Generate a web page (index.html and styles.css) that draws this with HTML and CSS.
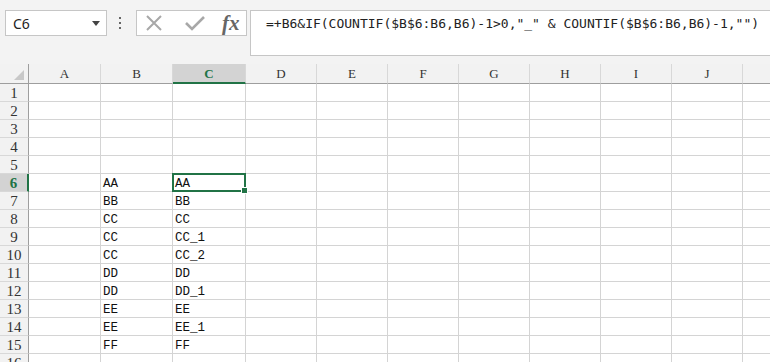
FILE: index.html
```html
<!DOCTYPE html>
<html lang="en">
<head>
  <meta charset="UTF-8">
  <title>Sheet1</title>
  <link rel="stylesheet" href="styles.css">
</head>
<body>
  <div class="toolbar">
    <div class="name-box">
      <span>C6</span>
      <svg class="caret" width="8" height="5" viewBox="0 0 8 5"><path d="M0 0h8L4 5z" fill="#444"/></svg>
    </div>
    <div class="grip"><i></i><i></i><i></i></div>
    <div class="fx-buttons">
      <svg width="20" height="20" viewBox="0 0 20 20"><path d="M3 3L17 17M17 3L3 17" stroke="#a8a8a8" stroke-width="2" fill="none"/></svg>
      <svg width="22" height="20" viewBox="0 0 22 20"><path d="M2 10l6 6L20 4" stroke="#a8a8a8" stroke-width="2.6" fill="none"/></svg>
      <span class="fx">fx</span>
    </div>
    <div class="formula">=+B6&amp;IF(COUNTIF($B$6:B6,B6)-1&gt;0,"_" &amp; COUNTIF($B$6:B6,B6)-1,"")</div>
  </div>

  <div class="sheet" id="sheet"></div>

  <script>
    // build the grid
    var cols = ['', 'A', 'B', 'C', 'D', 'E', 'F', 'G', 'H', 'I', 'J', ''];
    var data = {
      6: ['AA', 'AA'], 7: ['BB', 'BB'], 8: ['CC', 'CC'], 9: ['CC', 'CC_1'],
      10: ['CC', 'CC_2'], 11: ['DD', 'DD'], 12: ['DD', 'DD_1'], 13: ['EE', 'EE'],
      14: ['EE', 'EE_1'], 15: ['FF', 'FF'], 16: ['', '']
    };
    var sheet = document.getElementById('sheet');
    var html = '';
    for (var c = 0; c < cols.length; c++) {
      var cls = c === 0 ? 'corner' : 'col-head';
      if (cols[c] === 'C') cls += ' active';
      html += '<div class="' + cls + '">' + (c === 0 ? '<span class="tri"></span>' : cols[c]) + '</div>';
    }
    for (var r = 1; r <= 16; r++) {
      html += '<div class="row-head' + (r === 6 ? ' active' : '') + '">' + r + '</div>';
      for (var c = 1; c < cols.length; c++) {
        var v = '';
        if (data[r] && cols[c] === 'B') v = data[r][0];
        if (data[r] && cols[c] === 'C') v = data[r][1];
        var sel = (r === 6 && cols[c] === 'C') ? ' selected' : '';
        html += '<div class="cell' + sel + '">' + v + '</div>';
      }
    }
    sheet.innerHTML = html;
  </script>
</body>
</html>
```

FILE: styles.css
```css
/* Hoja de cálculo */
body {
  margin: 0;
  background-color: #f3f3f3;
  overflow: hidden;
  font-family: "Noto Sans", Arial, sans-serif;
}
.toolbar {
  display: flex;
  align-items: flex-start;
  padding-top: 10px;
  height: 54px;
  box-sizing: border-box;
}
.name-box {
  margin-left: 5px;
  width: 102px;
  height: 26px;
  box-sizing: border-box;
  background-color: #fff;
  border: 1px solid #c6c6c6;
  display: flex;
  align-items: center;
  justify-content: space-between;
  padding: 0 6px 0 7px;
  font-size: 14px;
  color: #222;
}
.grip {
  margin-left: 12px;
  width: 3px;
  height: 26px;
  display: flex;
  flex-direction: column;
  justify-content: center;
  gap: 3px;
}
.grip i {
  display: block;
  width: 2px;
  height: 2px;
  background-color: #666;
}
.fx-buttons {
  margin-left: 14px;
  width: 111px;
  height: 26px;
  box-sizing: border-box;
  background-color: #fff;
  border: 1px solid #c6c6c6;
  display: flex;
  align-items: center;
  padding-left: 7px;
  gap: 20px;
}
.fx-buttons svg {
  display: block;
}
.fx {
  margin-left: -4px;
  font-family: "Liberation Serif", serif;
  font-style: italic;
  font-weight: bold;
  font-size: 21px;
  color: #666;
  line-height: 20px;
}
.formula {
  margin-left: 3px;
  flex: 1;
  height: 46px;
  box-sizing: border-box;
  background-color: #fff;
  border: 1px solid #c6c6c6;
  border-right: none;
  padding: 5px 0 0 15px;
  font-family: "DejaVu Sans Mono", monospace;
  font-size: 13px;
  color: #222;
  white-space: nowrap;
  overflow: hidden;
}
.sheet {
  margin-top: 10px;
  display: grid;
  grid-template-columns: 29px 72px 72px 73px repeat(7, 71px) 40px;
  grid-auto-rows: 18px;
  grid-template-rows: 20px;
  background-color: #fff;
  font-family: "Liberation Mono", monospace;
  font-size: 12.5px;
  color: #111;
}
.corner, .col-head {
  background-color: #f2f2f2;
  border-right: 1px solid #d8d8d8;
  border-bottom: 1px solid #9e9e9e;
  box-sizing: border-box;
  text-align: center;
  line-height: 19px;
  color: #333;
  font-family: "Liberation Serif", serif;
  font-size: 13px;
}
.corner {
  position: relative;
  border-right-color: #9e9e9e;
}
.tri {
  position: absolute;
  right: 4px;
  bottom: 3px;
  width: 0;
  height: 0;
  border-left: 10px solid transparent;
  border-bottom: 10px solid #c8c8c8;
}
.col-head.active {
  background-color: #d3d3d3;
  border-bottom: 2px solid #217346;
  color: #217346;
  font-weight: bold;
}
.row-head {
  background-color: #f2f2f2;
  border-right: 1px solid #9e9e9e;
  border-bottom: 1px solid #d8d8d8;
  box-sizing: border-box;
  text-align: center;
  line-height: 18px;
  color: #333;
  font-family: "Liberation Serif", serif;
  font-size: 15px;
}
.row-head.active {
  background-color: #d3d3d3;
  border-right: 2px solid #217346;
  color: #217346;
  font-weight: bold;
}
.cell {
  border-right: 1px solid #d4d4d4;
  border-bottom: 1px solid #d4d4d4;
  box-sizing: border-box;
  padding-left: 2px;
  line-height: 20px;
  white-space: nowrap;
  overflow: hidden;
}
.cell.selected {
  position: relative;
  overflow: visible;
  z-index: 1;
}
.cell.selected::before {
  content: "";
  position: absolute;
  left: -1px;
  top: -1px;
  right: -1px;
  bottom: -1px;
  border: 2px solid #217346;
}
.cell.selected::after {
  content: "";
  position: absolute;
  right: -3px;
  bottom: -3px;
  width: 5px;
  height: 5px;
  background-color: #217346;
  border: 1px solid #fff;
}
```
